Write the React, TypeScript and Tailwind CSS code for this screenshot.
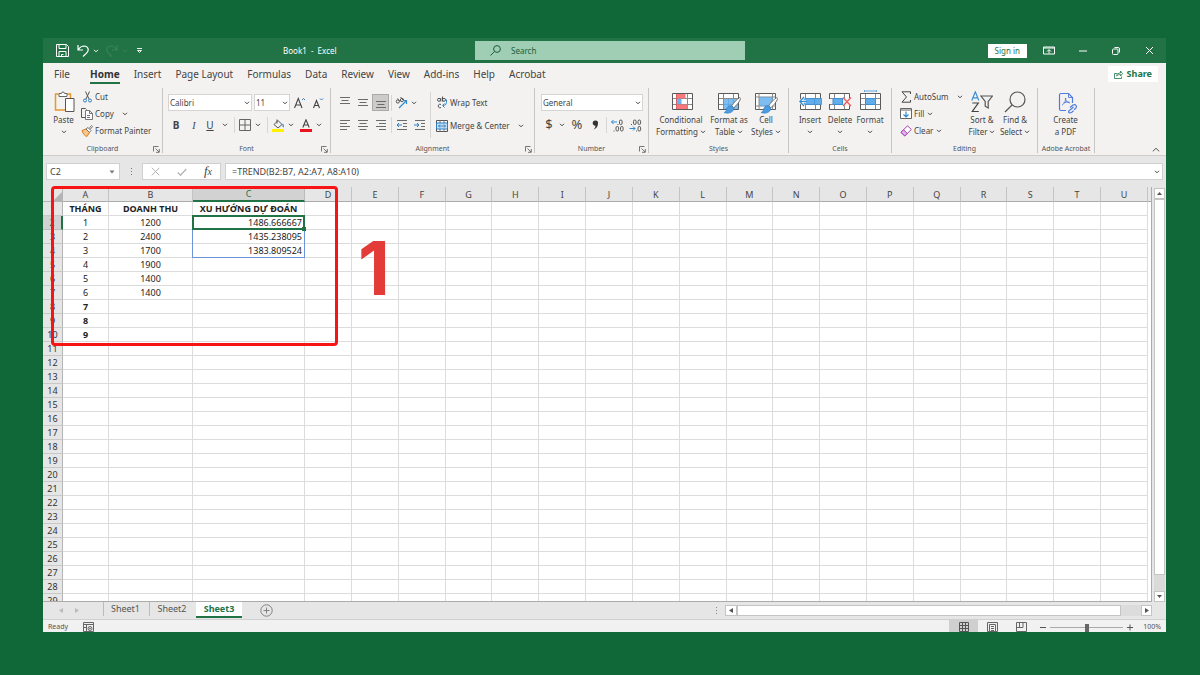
import type { ReactNode } from "react";

const menus = ["File", "Home", "Insert", "Page Layout", "Formulas", "Data", "Review", "View", "Add-ins", "Help", "Acrobat"];

const columns = "ABCDEFGHIJKLMNOPQRSTU".split("");

const rows = Array.from({ length: 29 }, (_, i) => i + 1);

const cells: Record<string, string> = {
  A1: "THÁNG", B1: "DOANH THU", C1: "XU HƯỚNG DỰ ĐOÁN",
  A2: "1", B2: "1200", C2: "1486.666667",
  A3: "2", B3: "2400", C3: "1435.238095",
  A4: "3", B4: "1700", C4: "1383.809524",
  A5: "4", B5: "1900",
  A6: "5", B6: "1400",
  A7: "6", B7: "1400",
  A8: "7", A9: "8", A10: "9",
};

const boldCells = ["A1", "B1", "C1", "A8", "A9", "A10"];

function Chevron({ className = "" }: { className?: string }) {
  return (
    <svg viewBox="0 0 6 4" className={`h-1 w-1.5 shrink-0 ${className}`} fill="none" stroke="currentColor">
      <path d="M1 .8 3 2.8 5 .8" />
    </svg>
  );
}

function Launcher() {
  return (
    <svg viewBox="0 0 7 7" className="size-[7px]" fill="none" stroke="#555" strokeWidth=".8">
      <path d="M.5 5.5v-5h5M2.5 2.5l3.5 3.5M6.3 3v3.3H3" />
    </svg>
  );
}

function Group({ label, width, launcher, children }: { label: string; width: string; launcher?: boolean; children: ReactNode }) {
  return (
    <section className={`flex h-[65px] shrink-0 flex-col border-r border-[#c8c6c4] ${width}`}>
      <div className="flex flex-1">{children}</div>
      <div className="relative h-2 text-center text-[7px] leading-[8px] text-[#555]">
        {label}
        {launcher && (
          <button aria-label={`${label} settings`} className="absolute right-[2px] bottom-0">
            <Launcher />
          </button>
        )}
      </div>
    </section>
  );
}

function BigButton({ icon, lines, chevron, width }: { icon: ReactNode; lines: string[]; chevron?: boolean; width: string }) {
  return (
    <button className={`flex shrink-0 flex-col items-center pt-[2px] whitespace-nowrap ${width}`}>
      <span className="flex h-6 items-start justify-center">{icon}</span>
      {lines.map((line, i) => (
        <span key={line} className="flex h-3 items-center gap-[2px] leading-[12px]">
          {line}
          {chevron && lines.length > 1 && i === lines.length - 1 && <Chevron />}
        </span>
      ))}
      {chevron && lines.length === 1 && <Chevron className="mt-1" />}
    </button>
  );
}

function SmallButton({ icon, label, chevron = "" }: { icon: ReactNode; label: string; chevron?: string }) {
  return (
    <button className="flex h-[17px] items-center gap-[2px] whitespace-nowrap">
      <span className="flex w-3 justify-center">{icon}</span>
      {label}
      {chevron && <Chevron className={chevron} />}
    </button>
  );
}

function Picker({ label, value, width }: { label: string; value: string; width: string }) {
  return (
    <div className={`relative h-[17px] shrink-0 ${width}`}>
      <select aria-label={label} className="h-full w-full appearance-none border border-[#d6d4d2] bg-white px-px text-[8px] leading-[15px]">
        <option>{value}</option>
      </select>
      <Chevron className="pointer-events-none absolute top-[7px] right-[2px]" />
    </div>
  );
}

function Divider({ className = "h-4" }: { className?: string }) {
  return <span className={`w-px shrink-0 bg-[#d8d6d4] ${className}`} />;
}

function Lines({ d }: { d: string }) {
  return (
    <svg viewBox="0 0 12 12" className="size-3" fill="none" stroke="#6b6b6b">
      <path d={d} />
    </svg>
  );
}

function TableGrid() {
  return (
    <>
      <path d="M.5.5h20v16H.5z" fill="#fff" />
      <path d="M.5 5.5h20M.5 11.5h20M5.5.5v16M15.5.5v16" fill="none" stroke="#8a8a8a" />
      <path d="M.5.5h20v16H.5z" fill="none" stroke="#5a5a5a" />
    </>
  );
}

function Brush() {
  return (
    <>
      <path d="M21.800 4.500c-3 1.800-6 5-8 8.300l2 2c3-2.500 5.700-6 6.900-9.300z" fill="#fff" stroke="#666" strokeWidth=".9" />
      <path d="M13.500 13c-3-.6-4.500 1-5 3.500-.3 1.700-1.200 2.500-2.500 3 4 1.500 9 .6 10-4.200z" fill="#4a9be0" stroke="#2f7cc0" strokeWidth=".6" />
    </>
  );
}

function TitleBar() {
  return (
    <header className="flex h-[25px] shrink-0 items-center bg-[#217346] text-white">
      <div className="flex w-[432px] shrink-0 items-center pl-[13px]">
        <div className="flex w-[227px] items-center">
          <button aria-label="Save">
            <svg viewBox="0 0 13 13" className="size-[13px]" fill="none" stroke="#fff">
              <path d="M.5.5h10l2 2v10H.5zM3 .5v4h7v-4M3 12.500V7.500h7v5M5.500 12.500v-2h2" />
            </svg>
          </button>
          <button aria-label="Undo" className="ml-2 flex items-center gap-1">
            <svg viewBox="0 0 12 13" className="h-[13px] w-3" fill="none" stroke="#fff" strokeWidth="1.200">
              <path d="M1 1v5h5M1.300 5.700C3 3 5 2 7.200 2c4 .2 5.200 4.200 2.600 6.800L6 12.500" />
            </svg>
            <Chevron />
          </button>
          <button aria-label="Redo" className="ml-[7px] flex items-center gap-1 text-[#3a8258]">
            <svg viewBox="0 0 12 13" className="h-[13px] w-3" fill="none" stroke="currentColor" strokeWidth="1.200">
              <path d="M11 1v5H6M10.700 5.700C9 3 7 2 4.800 2 .8 2.200-.4 6.200 2.200 8.800L6 12.500" />
            </svg>
            <Chevron />
          </button>
          <button aria-label="Customize toolbar" className="ml-2">
            <svg viewBox="0 0 7 6" className="h-1.5 w-[7px]" fill="none" stroke="#fff" strokeWidth=".9">
              <path d="M1 .5h5M1.500 2.500h4l-2 2z" />
            </svg>
          </button>
        </div>
        <span className="whitespace-pre">Book1  -  Excel</span>
      </div>
      <label className="flex h-[19px] w-[270px] shrink-0 items-center gap-[10px] bg-[#a0ceb4] pl-[15px] text-[#1b5e39]">
        <svg viewBox="0 0 11 11" className="size-[11px]" fill="none" stroke="currentColor">
          <circle cx="7" cy="4" r="3.400" />
          <path d="M4.500 6.500.5 10.500" />
        </svg>
        <input aria-label="Search" placeholder="Search" className="min-w-0 flex-1 bg-transparent outline-none placeholder:text-[#1b5e39]" />
      </label>
      <div className="flex flex-1 items-center justify-end pr-3">
        <button className="h-[14px] bg-white px-[7px] leading-[14px] text-[#217346]">Sign in</button>
        <button aria-label="Ribbon display options" className="ml-4">
          <svg viewBox="0 0 12 9" className="h-[9px] w-3" fill="none" stroke="#fff">
            <path d="M.5 1h11v7H.5zM.5 2h11M6 7.500V4M4 5.500l2-2 2 2" />
          </svg>
        </button>
        <button aria-label="Minimize" className="ml-6">
          <svg viewBox="0 0 8 8" className="size-2" stroke="#fff">
            <path d="M0 4h8" />
          </svg>
        </button>
        <button aria-label="Restore" className="ml-6">
          <svg viewBox="0 0 10 10" className="size-[10px]" fill="none" stroke="#fff">
            <rect x="1.500" y="3" width="5.500" height="5.500" rx="1" />
            <path d="M3.500 1.500h3.500q1.500 0 1.500 1.500v3.500" />
          </svg>
        </button>
        <button aria-label="Close" className="ml-6">
          <svg viewBox="0 0 9 9" className="size-[9px]" stroke="#fff">
            <path d="m1 1 7 7M8 1 1 8" />
          </svg>
        </button>
      </div>
    </header>
  );
}

function MenuBar() {
  return (
    <nav className="flex h-[23px] items-start pr-2 pl-[11px] text-[10px] leading-[16px]">
      {menus.map((m) => (
        <a
          key={m}
          href="#"
          className={
            m === "Home"
              ? "mr-[14px] ml-[6px] border-b-2 border-[#217346] pt-[3px] font-bold text-[#333]"
              : "mr-[14px] pt-[3px] whitespace-nowrap"
          }
        >
          {m}
        </a>
      ))}
      <button className="mt-[3px] ml-auto flex h-4 items-center gap-1 bg-white px-[6px] text-[9px] font-bold text-[#217346]">
        <svg viewBox="0 0 9 9" className="size-[9px]" fill="none" stroke="currentColor" strokeWidth=".8">
          <path d="M3.500 3.500h-3v5h7v-2M2.500 6c.5-2 1.800-3 4-3V1l2 2.500-2 2.500V4.500C5 4.500 3.500 5 2.500 6z" />
        </svg>
        Share
      </button>
    </nav>
  );
}

function ClipboardGroup() {
  return (
    <Group label="Clipboard" width="w-[120px]" launcher>
      <BigButton
        width="ml-[7px] w-[27px]"
        lines={["Paste"]}
        chevron
        icon={
          <svg viewBox="0 0 21 23" className="ml-[2px] h-[23px] w-[21px]" fill="none">
            <path d="M4.500 4h-3v16H11M12.500 4h4v4" stroke="#e8962e" strokeWidth="1.500" />
            <path d="M5 3.500h2.500a1.500 1.500 0 0 1 3 0H13v3H5z" fill="#fff" stroke="#666" />
            <path d="M11.500 8.500h8.500v13h-8.500z" fill="#fff" stroke="#555" />
          </svg>
        }
      />
      <div className="ml-1 flex flex-col">
        <SmallButton
          label="Cut"
          icon={
            <svg viewBox="0 0 9 12" className="h-3 w-[9px]" fill="none">
              <path d="M2.500.5 6 8M6.500.5 3 8" stroke="#555" />
              <circle cx="2" cy="9.500" r="1.500" stroke="#2f7cc0" />
              <circle cx="7" cy="9.500" r="1.500" stroke="#2f7cc0" />
            </svg>
          }
        />
        <SmallButton
          label="Copy"
          chevron="ml-[6px]"
          icon={
            <svg viewBox="0 0 12 12" className="size-3" fill="none" stroke="#555">
              <path d="M4 9.500H.5v-9h4l1 1" />
              <path d="M4.500 2.500h4l3 3v6h-7zM8.500 2.500v3h3M6 7.500h3M6 9.500h3" fill="#fff" strokeWidth=".8" />
            </svg>
          }
        />
        <SmallButton
          label="Format Painter"
          icon={
            <svg viewBox="0 0 12 12" className="size-3" fill="none">
              <path d="M1 5.500 5 4l3.500 3.500L6 11.500C4 11 2 9 1 5.500z" fill="#f7c58c" stroke="#e07b1a" />
              <path d="m5 4 2-1.500L10 5.500 8.500 7.500zM8 3.500l2.500-3 1 1-2.500 3" stroke="#555" fill="#fff" strokeWidth=".8" />
            </svg>
          }
        />
      </div>
    </Group>
  );
}

function FontGroup() {
  return (
    <Group label="Font" width="w-[168px]" launcher>
      <div className="flex flex-col gap-[6px] pt-[6px] pl-[5px]">
        <div className="flex items-center gap-[2px]">
          <Picker label="Font name" value="Calibri" width="w-[84px]" />
          <Picker label="Font size" value="11" width="w-9" />
          <button aria-label="Increase font size" className="ml-[2px]">
            <svg viewBox="0 0 12 12" className="size-3" fill="none">
              <path d="M.5 11 4.300 1.500 8 11M1.800 8h5" stroke="#444" strokeWidth="1.100" />
              <path d="m8 3 1.500-1.500L11 3" stroke="#2f7cc0" />
            </svg>
          </button>
          <button aria-label="Decrease font size" className="ml-1">
            <svg viewBox="0 0 12 12" className="size-3" fill="none">
              <path d="M1.500 11 4.500 3.500 7.500 11M2.500 8.500h4" stroke="#444" strokeWidth="1.100" />
              <path d="M8 1.500 9.500 3 11 1.500" stroke="#2f7cc0" />
            </svg>
          </button>
        </div>
        <div className="flex h-4 items-center text-[10px]">
          <button className="w-4 font-bold">B</button>
          <button className="ml-[2px] w-4 font-['Liberation_Serif',serif] italic">I</button>
          <button className="w-4 underline underline-offset-1">U</button>
          <Chevron className="ml-1" />
          <Divider className="ml-[6px] h-4" />
          <button aria-label="Borders" className="ml-1">
            <svg viewBox="0 0 12 12" className="size-3" fill="none" stroke="#666">
              <path d="M.5.5h11v11H.5zM6 .5v11M.5 6h11" />
            </svg>
          </button>
          <Chevron className="ml-1" />
          <Divider className="ml-[6px] h-4" />
          <button aria-label="Fill color" className="ml-1">
            <svg viewBox="0 0 12 13" className="h-[13px] w-3" fill="none">
              <path d="m2 5.500 4-4 4 4-4 3.500zM5 .5v4" stroke="#555" />
              <path d="M10.500 5q1.500 2 .3 3.200" stroke="#2f7cc0" strokeWidth="1.200" />
              <path d="M0 10h12v3H0z" fill="#fff200" />
            </svg>
          </button>
          <Chevron className="ml-1" />
          <button aria-label="Font color" className="ml-[6px]">
            <svg viewBox="0 0 12 13" className="h-[13px] w-3" fill="none">
              <path d="M2.800 8.500 6 .8l3.200 7.700M4 6h4" stroke="#444" strokeWidth="1.100" />
              <path d="M0 10h12v3H0z" fill="#e8131d" />
            </svg>
          </button>
          <Chevron className="ml-1" />
        </div>
      </div>
    </Group>
  );
}

function AlignmentGroup() {
  return (
    <Group label="Alignment" width="w-[204px]" launcher>
      <div className="flex flex-col gap-[6px] pt-[6px] pl-[5px]">
        <div className="flex h-[17px] items-center">
          <button aria-label="Top align" className="flex w-[18px] justify-center">
            <Lines d="M1 .5h10M2.500 3.500h7M1 6.500h10" />
          </button>
          <button aria-label="Middle align" className="flex w-[18px] justify-center">
            <Lines d="M1 2.500h10M2.500 5.500h7M1 8.500h10" />
          </button>
          <button aria-label="Bottom align" className="flex h-[17px] w-[17px] items-center justify-center border border-[#aaa] bg-[#cdcbca]">
            <Lines d="M1 4.500h10M2.500 7.500h7M1 10.500h10" />
          </button>
          <Divider className="ml-[2px] h-4" />
          <button aria-label="Orientation" className="ml-[3px] flex items-center gap-[3px]">
            <svg viewBox="0 0 13 13" className="size-[13px]" fill="none">
              <circle cx="2.800" cy="5.500" r="1.600" stroke="#555" />
              <path d="M2.500 2.500 5 5.500M5.500 1l3 3.500" stroke="#555" />
              <circle cx="7" cy="4" r="1.600" stroke="#555" />
              <path d="M4 12 11.500 4.500M8 4.500h3.500V8" stroke="#2f8ad0" strokeWidth="1.200" />
            </svg>
            <Chevron />
          </button>
        </div>
        <div className="flex h-4 items-center">
          <button aria-label="Align left" className="flex w-[18px] justify-center">
            <Lines d="M1 1.500h10M1 4.500h7M1 7.500h10M1 10.500h7" />
          </button>
          <button aria-label="Center" className="flex w-[18px] justify-center">
            <Lines d="M1 1.500h10M2.500 4.500h7M1 7.500h10M2.500 10.500h7" />
          </button>
          <button aria-label="Align right" className="flex w-[17px] justify-center">
            <Lines d="M1 1.500h10M4 4.500h7M1 7.500h10M4 10.500h7" />
          </button>
          <Divider className="ml-[2px] h-4" />
          <button aria-label="Decrease indent" className="ml-1">
            <svg viewBox="0 0 12 12" className="size-3" fill="none" stroke="#6b6b6b">
              <path d="M1 1.500h10M7 4.500h4M7 7.500h4M1 10.500h10" />
              <path d="M6 6H1M3 4 1 6l2 2" stroke="#2f7cc0" />
            </svg>
          </button>
          <button aria-label="Increase indent" className="ml-[6px]">
            <svg viewBox="0 0 12 12" className="size-3" fill="none" stroke="#6b6b6b">
              <path d="M1 1.500h10M7 4.500h4M7 7.500h4M1 10.500h10" />
              <path d="M0 6h5M3 4l2 2-2 2" stroke="#2f7cc0" />
            </svg>
          </button>
        </div>
      </div>
      <Divider className="mt-1 ml-1 h-[46px]" />
      <div className="ml-[5px] flex flex-col gap-[6px] pt-[6px]">
        <SmallButton
          label="Wrap Text"
          icon={
            <svg viewBox="0 0 12 13" className="h-[13px] w-3" fill="none" stroke="#555">
              <circle cx="3" cy="3.800" r="1.500" />
              <circle cx="8" cy="3.800" r="1.500" />
              <path d="M4.800 2v3.500M6.500.5v5M5 8.500a1.800 1.800 0 1 0 0 3" />
              <path d="M10.500 3.500v3q0 3-3.500 3M8.500 7.500l-2 2 2 2" stroke="#2f8ad0" />
            </svg>
          }
        />
        <SmallButton
          label="Merge & Center"
          chevron="ml-[6px]"
          icon={
            <svg viewBox="0 0 12 12" className="size-3" fill="none">
              <path d="M.5.5h11v11H.5z" fill="#fff" stroke="#555" />
              <path d="M4 .5v3M8 .5v3M4 8.500v3M8 8.500v3" stroke="#777" />
              <path d="M.5 3h11v6H.5z" fill="#c3e1f8" stroke="#2f7cc0" />
              <path d="M2.500 6h7M4 4.500 2.500 6 4 7.500M8 4.500 9.500 6 8 7.500" stroke="#1f6cb0" strokeWidth=".8" />
            </svg>
          }
        />
      </div>
    </Group>
  );
}

function NumberGroup() {
  return (
    <Group label="Number" width="w-[114px]" launcher>
      <div className="flex flex-col gap-[6px] pt-[6px] pl-[6px]">
        <Picker label="Number format" value="General" width="w-[102px]" />
        <div className="flex h-4 items-center text-[13px]">
          <button className="ml-1 w-2">$</button>
          <Chevron className="ml-[6px]" />
          <button className="ml-[6px] w-3">%</button>
          <button aria-label="Comma style" className="ml-[9px]">
            <svg viewBox="0 0 7 10" className="h-[10px] w-[7px]">
              <path d="M3.200.5A2.600 2.600 0 0 1 6 3.300C6 6.500 4.500 8.500 1.500 9.500c1.500-1.500 2-2.500 2-3.800A2.500 2.500 0 0 1 .7 3 2.500 2.500 0 0 1 3.200.5z" fill="#333" />
            </svg>
          </button>
          <Divider className="ml-[7px] h-4" />
          <button aria-label="Increase decimal" className="ml-1">
            <svg viewBox="0 0 13 13" className="size-[13px]" fill="none" stroke="#555">
              <rect x="8.500" y="1" width="2.600" height="4.500" rx="1.300" />
              <rect x="5" y="7.500" width="2.600" height="4.500" rx="1.300" />
              <rect x="9.500" y="7.500" width="2.600" height="4.500" rx="1.300" />
              <path d="M3 11.500v1M7 5v1" />
              <path d="M6 3H.5M2.500 1l-2 2 2 2" stroke="#2f8ad0" />
            </svg>
          </button>
          <button aria-label="Decrease decimal" className="ml-[5px]">
            <svg viewBox="0 0 13 13" className="size-[13px]" fill="none" stroke="#555">
              <rect x="4.500" y="1" width="2.600" height="4.500" rx="1.300" />
              <rect x="9" y="1" width="2.600" height="4.500" rx="1.300" />
              <rect x="9" y="7.500" width="2.600" height="4.500" rx="1.300" />
              <path d="M2.500 5v1M7.500 11.500v1" />
              <path d="M.5 9.500H6M4 7.500l2 2-2 2" stroke="#2f8ad0" />
            </svg>
          </button>
        </div>
      </div>
    </Group>
  );
}

function StylesGroup() {
  return (
    <Group label="Styles" width="w-[140px]">
      <BigButton
        width="ml-[5px] w-[54px]"
        lines={["Conditional", "Formatting"]}
        chevron
        icon={
          <svg viewBox="0 0 21 20" className="mt-[3px] ml-[2px] h-5 w-[21px]">
            <TableGrid />
            <path d="M4.500 1h9v4.500h-9zM4.500 11.500h11V16h-11z" fill="#f9777b" />
            <path d="M4.500 6h5v5h-5z" fill="#6bb3ef" />
            <path d="M4.500 1v15" stroke="#d9474b" strokeWidth=".8" />
          </svg>
        }
      />
      <BigButton
        width="w-[42px]"
        lines={["Format as", "Table"]}
        chevron
        icon={
          <svg viewBox="0 0 23 21" className="mt-[3px] h-[21px] w-[23px]">
            <TableGrid />
            <path d="M6 6h14v10H6z" fill="#7dbdf0" />
            <path d="M6 11.500h14M10.500 6v10M15.500 6v10" stroke="#5ea7e2" strokeWidth=".8" />
            <Brush />
          </svg>
        }
      />
      <BigButton
        width="w-8"
        lines={["Cell", "Styles"]}
        chevron
        icon={
          <svg viewBox="0 0 23 21" className="mt-[3px] h-[21px] w-[23px]">
            <path d="M.5.5h20v16H.5z" fill="#fff" stroke="#5a5a5a" />
            <path d="M.5 4h20M.5 13h20M4 .5v16M17.500.5v16" stroke="#8a8a8a" />
            <path d="M4.500 4.500h12.500v8H4.500z" fill="#7dbdf0" stroke="#5ea7e2" strokeWidth=".8" />
            <Brush />
          </svg>
        }
      />
    </Group>
  );
}

function CellsGroup() {
  return (
    <Group label="Cells" width="w-[103px]">
      <BigButton
        width="ml-[6px] w-[30px]"
        lines={["Insert"]}
        chevron
        icon={
          <svg viewBox="0 0 23 18" className="mt-[3px] h-[18px] w-[23px]">
            <g transform="translate(1)">
              <TableGrid />
            </g>
            <path d="M5 5.500h17.500v6H5z" fill="#62aeea" stroke="#3d8fd4" strokeWidth=".8" />
            <path d="M15.500 5.500v6" stroke="#3d8fd4" strokeWidth=".8" />
            <path d="M5 4 .8 8.500 5 13M1 8.500h6" fill="none" stroke="#f3f2f1" strokeWidth="2.600" />
            <path d="M5 4 .8 8.500 5 13M1 8.500h7" fill="none" stroke="#2f8ad0" strokeWidth="1.200" />
          </svg>
        }
      />
      <BigButton
        width="w-[30px]"
        lines={["Delete"]}
        chevron
        icon={
          <svg viewBox="0 0 23 18" className="mt-[3px] h-[18px] w-[23px]">
            <TableGrid />
            <path d="M0 6h4v5H0z" fill="#f3f2f1" />
            <path d="M4 5.500h9.500v6H4z" fill="#62aeea" stroke="#3d8fd4" />
            <path d="M14 5h8.500v7.500H14z" fill="#f3f2f1" />
            <path d="m14 4.500 8 8.500M22 4.500 14 13" stroke="#f0575c" strokeWidth="1.200" />
          </svg>
        }
      />
      <BigButton
        width="w-[30px]"
        lines={["Format"]}
        chevron
        icon={
          <svg viewBox="0 0 21 20" className="h-5 w-[21px]">
            <g transform="translate(0 3)">
              <TableGrid />
              <path d="M5.500 5.500h10v6h-10z" fill="#62aeea" stroke="#3d8fd4" />
            </g>
            <path d="M4.500 0v2M16.500 0v2M4.500 1h12" stroke="#5fa9e0" />
          </svg>
        }
      />
    </Group>
  );
}

function EditingGroup() {
  return (
    <Group label="Editing" width="w-[146px]">
      <div className="ml-2 flex w-[66px] flex-col">
        <SmallButton
          label="AutoSum"
          chevron="ml-[6px]"
          icon={
            <svg viewBox="0 0 11 12" className="h-3 w-[11px]" fill="none" stroke="#444">
              <path d="M9.500 3V.8H1L5.500 6 1 11.200h8.500V9" />
            </svg>
          }
        />
        <SmallButton
          label="Fill"
          chevron="ml-px"
          icon={
            <svg viewBox="0 0 12 11" className="h-[11px] w-3" fill="none">
              <path d="M.5.5h11v10H.5z" fill="#fff" stroke="#666" />
              <path d="M1 2h10" stroke="#666" />
              <path d="M6 3.500V9M3.500 6.500 6 9l2.500-2.500" stroke="#2f8ad0" strokeWidth="1.200" />
            </svg>
          }
        />
        <SmallButton
          label="Clear"
          chevron="ml-px"
          icon={
            <svg viewBox="0 0 12 12" className="size-3" fill="none" stroke="#a33fb0">
              <path d="M7.500.8 11.300 4.500 4.800 11 1 7.300z" fill="#fff" />
              <path d="M3.500 4.800 7.300 8.500 4.800 11 1 7.300z" fill="#e3b3ea" />
            </svg>
          }
        />
      </div>
      <BigButton
        width="w-8"
        lines={["Sort &", "Filter"]}
        chevron
        icon={
          <svg viewBox="0 0 22 22" className="mt-px h-[22px] w-[22px]" fill="none">
            <path d="M.8 9.500 4.300.8l3.500 8.700M2 6.800h4.600" stroke="#3d8fd4" strokeWidth="1.200" />
            <path d="M1.300 12h6l-6 8.500h6.500" stroke="#444" strokeWidth="1.200" />
            <path d="M10 5h11.500l-4.300 5.500v6.500l-3-1.800v-4.700z" stroke="#555" strokeWidth="1.200" />
          </svg>
        }
      />
      <BigButton
        width="ml-px w-8"
        lines={["Find &", "Select"]}
        chevron
        icon={
          <svg viewBox="0 0 22 22" className="mt-px h-[22px] w-[22px]" fill="none" stroke="#555" strokeWidth="1.200">
            <circle cx="13.500" cy="8.500" r="7.500" />
            <path d="M8.300 13.800 1 21" />
          </svg>
        }
      />
    </Group>
  );
}

function AcrobatGroup() {
  return (
    <Group label="Adobe Acrobat" width="w-[57px]">
      <BigButton
        width="w-[55px]"
        lines={["Create", "a PDF"]}
        icon={
          <svg viewBox="0 0 20 22" className="mt-[2px] ml-1 h-[22px] w-5" fill="none" stroke="#4f7be0" strokeWidth="1.200">
            <path d="M8 18.500H3q-1.500 0-1.500-1.500V3q0-1.500 1.500-1.500h7.500l4 4V11" />
            <path d="M10.500 1.500v4h4" strokeWidth=".9" />
            <path d="M4 13c1.500-.3 4-4 3.800-7-.9.300-.8 3.500 4 5M5.500 10.800c2-.8 4-1 6-.6" strokeWidth="1" />
            <path d="m12 15.500 3-2.500q2-1 3 .5t-.5 3l-1.500 1.200M15.500 15l-3.500 3q-2 1.500-1.200 2.500t3-.2l1.700-1.500" />
          </svg>
        }
      />
    </Group>
  );
}

function FormulaBar() {
  return (
    <div className="flex h-8 shrink-0 items-center border-t border-[#cfcdcb] bg-[#e6e6e6] pr-[3px] pl-[3px]">
      <div className="flex h-[17px] w-[74px] items-center border border-[#d0d0d0] bg-white pr-1">
        <input aria-label="Name box" defaultValue="C2" className="w-full min-w-0 pl-[3px] text-[9px] outline-none" />
        <svg viewBox="0 0 6 4" className="h-1 w-1.5 shrink-0">
          <path d="M.5.5h5L3 3.500z" fill="#777" />
        </svg>
      </div>
      <span className="flex w-[22px] flex-col items-center gap-[2px]">
        <i className="size-px bg-[#777]" />
        <i className="size-px bg-[#777]" />
        <i className="size-px bg-[#777]" />
      </span>
      <div className="flex h-[17px] w-[79px] items-center justify-between border border-[#d0d0d0] bg-white px-2">
        <button aria-label="Cancel">
          <svg viewBox="0 0 9 9" className="size-[9px]" stroke="#b4b4b4">
            <path d="m.8.8 7.500 7.500M8.300.8.8 8.300" />
          </svg>
        </button>
        <button aria-label="Enter">
          <svg viewBox="0 0 10 8" className="h-2 w-[10px]" fill="none" stroke="#b4b4b4" strokeWidth="1.300">
            <path d="m.8 4.500 2.700 2.700L9.300 1" />
          </svg>
        </button>
        <button aria-label="Insert function" className="font-['Liberation_Serif',serif] text-[13px] leading-[14px] italic">
          f<span className="text-[10px]">x</span>
        </button>
      </div>
      <div className="ml-1 flex h-[17px] flex-1 items-center border border-[#d0d0d0] bg-white pr-[2px] pl-[6px]">
        <input aria-label="Formula" defaultValue="=TREND(B2:B7, A2:A7, A8:A10)" className="min-w-0 flex-1 text-[9px] outline-none" />
        <Chevron />
      </div>
    </div>
  );
}

function Cell({ id, column }: { id: string; column: string }) {
  const align = column === "C" && id !== "C1" ? "pr-[2px] text-right" : "text-center";
  const weight = boldCells.includes(id) ? "font-bold" : "";
  return (
    <td className={`relative border-r border-b border-[#dcdcdc] p-0 whitespace-nowrap text-[#222] ${align} ${weight}`}>
      {cells[id]}
      {(id === "C3" || id === "C4") && (
        <span className={`absolute -top-px -right-px -bottom-px -left-px border-x border-[#6f93d8] ${id === "C4" ? "border-b" : ""}`} />
      )}
      {id === "C2" && (
        <span className="absolute -top-px -right-px -bottom-px -left-px z-10 border-2 border-[#217346]">
          <i className="absolute -right-[3px] -bottom-[3px] size-1 bg-[#217346]" />
        </span>
      )}
    </td>
  );
}

function Sheet() {
  return (
    <div className="relative flex min-h-0 flex-1 bg-[#e6e6e6]">
      <div className="flex min-w-0 flex-1 overflow-hidden border-b border-[#ababab] bg-white">
        <div className="min-w-0 flex-1">
          <table className="w-full table-fixed border-separate border-spacing-0 text-[9px] leading-[13px]">
            <colgroup>
              <col className="w-5" />
              <col className="w-[46px]" />
              <col className="w-[84px]" />
              <col className="w-[112px]" />
              <col className="w-[47px]" />
            </colgroup>
            <thead>
              <tr className="h-[15px] bg-[#e6e6e6] text-[#444]">
                <th aria-label="Select all" className="border-r border-b border-[#b5b5b5] p-0">
                  <svg viewBox="0 0 10 10" className="mt-1 ml-auto size-[9px]">
                    <path d="M10 0v10H0z" fill="#b4b4b4" />
                  </svg>
                </th>
                {columns.map((c) => (
                  <th
                    key={c}
                    className={
                      c === "C"
                        ? "border-r border-b-2 border-r-[#bbb] border-b-[#217346] bg-[#d2d2d2] p-0 font-normal text-[#217346]"
                        : "border-r border-b border-r-[#c4c4c4] border-b-[#ababab] p-0 font-normal"
                    }
                  >
                    {c}
                  </th>
                ))}
              </tr>
            </thead>
            <tbody>
              {rows.map((r) => (
                <tr key={r} className="h-[14px]">
                  <th
                    className={
                      r === 2
                        ? "border-r-2 border-b border-r-[#217346] border-b-[#bbb] bg-[#d2d2d2] p-0 font-normal text-[#217346]"
                        : "border-r border-b border-r-[#b5b5b5] border-b-[#c8c8c8] bg-[#e6e6e6] p-0 font-normal text-[#333]"
                    }
                  >
                    {r}
                  </th>
                  {columns.map((c) => (
                    <Cell key={c} id={`${c}${r}`} column={c} />
                  ))}
                </tr>
              ))}
            </tbody>
          </table>
        </div>
        <div className="w-1 border-r border-[#ababab]">
          <div className="h-[15px] border-b border-[#ababab] bg-[#e6e6e6]" />
        </div>
      </div>
      <div className="flex w-[14px] flex-col items-center pt-px">
        <button aria-label="Scroll up" className="flex h-[11px] w-[11px] items-center justify-center border border-[#c4c4c4] bg-white">
          <svg viewBox="0 0 5 3" className="h-[3px] w-[5px]">
            <path d="M0 3h5L2.500 0z" fill="#555" />
          </svg>
        </button>
        <div className="w-[11px] flex-1 bg-[#dadada]">
          <div className="h-[96%] border border-[#c4c4c4] bg-white" />
        </div>
        <button aria-label="Scroll down" className="flex h-[11px] w-[11px] items-center justify-center border border-[#c4c4c4] bg-white">
          <svg viewBox="0 0 5 3" className="h-[3px] w-[5px]">
            <path d="M0 0h5L2.500 3z" fill="#555" />
          </svg>
        </button>
      </div>

      {/* step marker and its frame */}
      <div className="pointer-events-none absolute -top-px left-2 h-[160px] w-[287px] rounded-[4px] border-[3px] border-[#f71414]" />
      <div className="pointer-events-none absolute top-[44px] left-[315px] font-['Inter',sans-serif] text-[74px] leading-[74px] font-bold text-[#e23b38]">
        1
      </div>
    </div>
  );
}

function SheetTabs() {
  return (
    <div className="flex h-[18px] shrink-0 items-start border-b border-[#d0d0d0] bg-[#e6e6e6] text-[9px] leading-[14px] text-[#555]">
      <div className="flex h-4 w-[60px] items-center gap-3 pl-4">
        <button aria-label="Previous sheet">
          <svg viewBox="0 0 4 5" className="h-[5px] w-1">
            <path d="M4 0v5L0 2.500z" fill="#bbb" />
          </svg>
        </button>
        <button aria-label="Next sheet">
          <svg viewBox="0 0 4 5" className="h-[5px] w-1">
            <path d="M0 0v5l4-2.500z" fill="#bbb" />
          </svg>
        </button>
      </div>
      <button className="h-[14px] w-[46px] border-l border-[#bbb] pr-[2px]">Sheet1</button>
      <button className="h-[14px] w-[47px] border-l border-[#bbb] pr-[2px]">Sheet2</button>
      <button className="h-4 w-[46px] border-b-2 border-[#217346] bg-white font-bold text-[#217346]">Sheet3</button>
      <button aria-label="New sheet" className="mt-[2px] ml-[18px]">
        <svg viewBox="0 0 13 13" className="size-[13px]" fill="none" stroke="#777" strokeWidth=".9">
          <circle cx="6.500" cy="6.500" r="5.700" />
          <path d="M6.500 3.500v6M3.500 6.500h6" />
        </svg>
      </button>
      <div className="mt-[3px] ml-auto flex h-[11px] items-center pr-[14px]">
        <span className="mr-2 flex flex-col gap-[2px]">
          <i className="size-px bg-[#888]" />
          <i className="size-px bg-[#888]" />
          <i className="size-px bg-[#888]" />
        </span>
        <button aria-label="Scroll left" className="flex h-[11px] w-3 items-center justify-center border border-[#c4c4c4] bg-white">
          <svg viewBox="0 0 4 5" className="h-[5px] w-1">
            <path d="M4 0v5L0 2.500z" fill="#555" />
          </svg>
        </button>
        <div className="h-[11px] w-[404px] bg-[#dcdcdc]">
          <div className="h-full w-[95%] border border-[#c4c4c4] bg-white" />
        </div>
        <button aria-label="Scroll right" className="flex h-[11px] w-[11px] items-center justify-center border border-[#c4c4c4] bg-white">
          <svg viewBox="0 0 4 5" className="h-[5px] w-1">
            <path d="M0 0v5l4-2.500z" fill="#555" />
          </svg>
        </button>
      </div>
    </div>
  );
}

function StatusBar() {
  return (
    <footer className="flex h-3 shrink-0 items-start overflow-hidden bg-[#f1f1f1] text-[7px] leading-[14px] text-[#555]">
      <span className="pl-[5px]">Ready</span>
      <button aria-label="Record macro" className="mt-[2px] ml-[15px]">
        <svg viewBox="0 0 11 10" className="h-[10px] w-[11px]" fill="none" stroke="#666">
          <path d="M.5.5h10v9H.5zM.5 2.500h10M3.500 2.500v7M.5 5.500h3" />
          <circle cx="7" cy="6.500" r="2" fill="#fff" />
          <circle cx="7" cy="6.500" r=".6" />
        </svg>
      </button>
      <div className="ml-auto flex items-start">
        <button aria-label="Normal view" className="flex h-3 w-[29px] justify-center bg-[#cfcfcf] pt-[2px]">
          <svg viewBox="0 0 10 10" className="size-[10px]" fill="none" stroke="#555">
            <path d="M.5.5h9v9h-9zM3.500.5v9M6.500.5v9M.5 3.500h9M.5 6.500h9" />
          </svg>
        </button>
        <button aria-label="Page layout view" className="flex h-3 w-[29px] justify-center pt-[2px]">
          <svg viewBox="0 0 11 10" className="h-[10px] w-[11px]" fill="none" stroke="#666">
            <path d="M.5.5h10v9H.5zM2.500 2.500h6v7h-6zM4 4.500h3M4 6.500h3M4 8.500h3" />
          </svg>
        </button>
        <button aria-label="Page break view" className="flex h-3 w-[29px] justify-center pt-[2px]">
          <svg viewBox="0 0 11 10" className="h-[10px] w-[11px]" fill="none" stroke="#666">
            <path d="M.5.5h10v9H.5zM3.500.5v5M7 .5v5M.5 5.500H7" />
          </svg>
        </button>
        <button aria-label="Zoom out" className="mt-[7px] ml-1">
          <svg viewBox="0 0 6 1" className="h-px w-1.5">
            <path d="M0 .5h6" stroke="#555" />
          </svg>
        </button>
        <input
          aria-label="Zoom"
          type="range"
          className="mx-1 mt-[3px] h-[9px] w-[73px] appearance-none bg-[linear-gradient(#aaa,#aaa)] bg-[length:100%_1px] bg-center bg-no-repeat [&::-webkit-slider-thumb]:h-[8px] [&::-webkit-slider-thumb]:w-1 [&::-webkit-slider-thumb]:appearance-none [&::-webkit-slider-thumb]:bg-[#666]"
        />
        <button aria-label="Zoom in" className="mt-1">
          <svg viewBox="0 0 6 7" className="h-[7px] w-1.5">
            <path d="M0 3.500h6M3 .5v6" stroke="#555" />
          </svg>
        </button>
        <span className="w-[33px] pr-[5px] text-right">100%</span>
      </div>
    </footer>
  );
}

export default function App() {
  return (
    <div className="flex h-screen flex-col bg-[#106838] pt-[38px] pr-[34px] pb-[43px] pl-[43px] font-['Noto_Sans',sans-serif] text-[8px] text-[#444]">
      <main className="flex min-h-0 flex-1 flex-col overflow-hidden">
        <TitleBar />
        <div className="shrink-0 bg-[#f3f2f1]">
          <MenuBar />
          <div className="flex h-[69px] pt-[2px]">
            <ClipboardGroup />
            <FontGroup />
            <AlignmentGroup />
            <NumberGroup />
            <StylesGroup />
            <CellsGroup />
            <EditingGroup />
            <AcrobatGroup />
            <button aria-label="Collapse ribbon" className="mr-[6px] mb-[3px] ml-auto self-end">
              <svg viewBox="0 0 8 5" className="h-[5px] w-2" fill="none" stroke="#555">
                <path d="m.8 4.300 3.200-3 3.200 3" />
              </svg>
            </button>
          </div>
        </div>
        <FormulaBar />
        <Sheet />
        <SheetTabs />
        <StatusBar />
      </main>
    </div>
  );
}
